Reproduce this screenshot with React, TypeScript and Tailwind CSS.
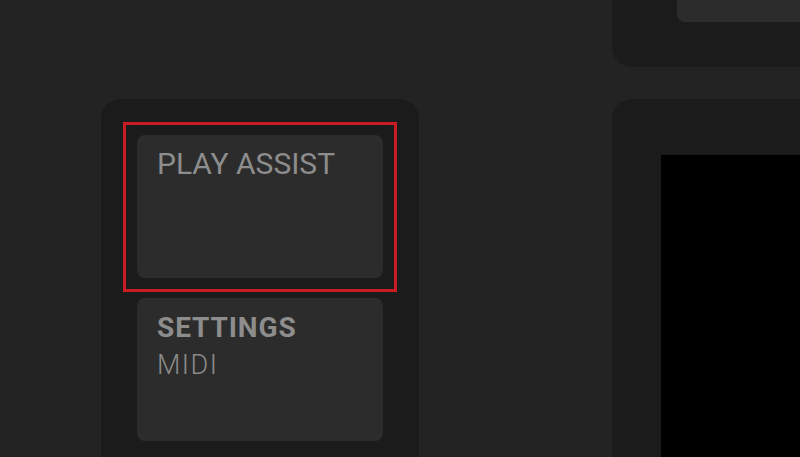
import React from 'react';

const font = { fontFamily: 'Roboto, "Noto Sans", sans-serif' };

const Pad: React.FC<{ children?: React.ReactNode; className?: string }> = ({ children, className }) => (
  <div className={`h-[143px] w-[246px] rounded-[8px] bg-[#2c2c2c] ${className ?? ''}`}>{children}</div>
);

export default function App() {
  return (
    <div className="flex h-[457px] w-[800px] overflow-hidden bg-[#232323]" style={font}>
      {/* left panel */}
      <div className="ml-[101px] mt-[99px] h-[420px] w-[318px] shrink-0 rounded-[20px] bg-[#1b1b1b] pl-[22px] pt-[23px]">
        <div className="h-[170px] w-[274px] border-[3px] border-[#c81d25] pl-[11px] pt-[10px]">
          <Pad className="pl-[20px] pt-[11px]">
            <div className="text-[30px] leading-[36px] text-[#8d8d8d]">PLAY ASSIST</div>
          </Pad>
        </div>
        <Pad className="ml-[14px] mt-[6px] pl-[20px] pt-[13px]">
          <div className="text-[28px] font-bold leading-[34px] tracking-[0.9px] text-[#8d8d8d]">SETTINGS</div>
          <div className="text-[27px] font-light leading-[40px] tracking-[1.5px] text-[#8a8a8a]">MIDI</div>
        </Pad>
      </div>

      {/* right column */}
      <div className="ml-[193px] flex w-[260px] shrink-0 flex-col gap-[32px]">
        <div className="flex h-[67px] rounded-bl-[20px] bg-[#1b1b1b] pl-[65px]">
          <div className="h-[22px] flex-1 rounded-bl-[8px] bg-[#2c2c2c]" />
        </div>
        <div className="flex-1 rounded-tl-[20px] bg-[#1b1b1b] pl-[49px] pt-[56px]">
          <div className="h-full bg-black" />
        </div>
      </div>
    </div>
  );
}
